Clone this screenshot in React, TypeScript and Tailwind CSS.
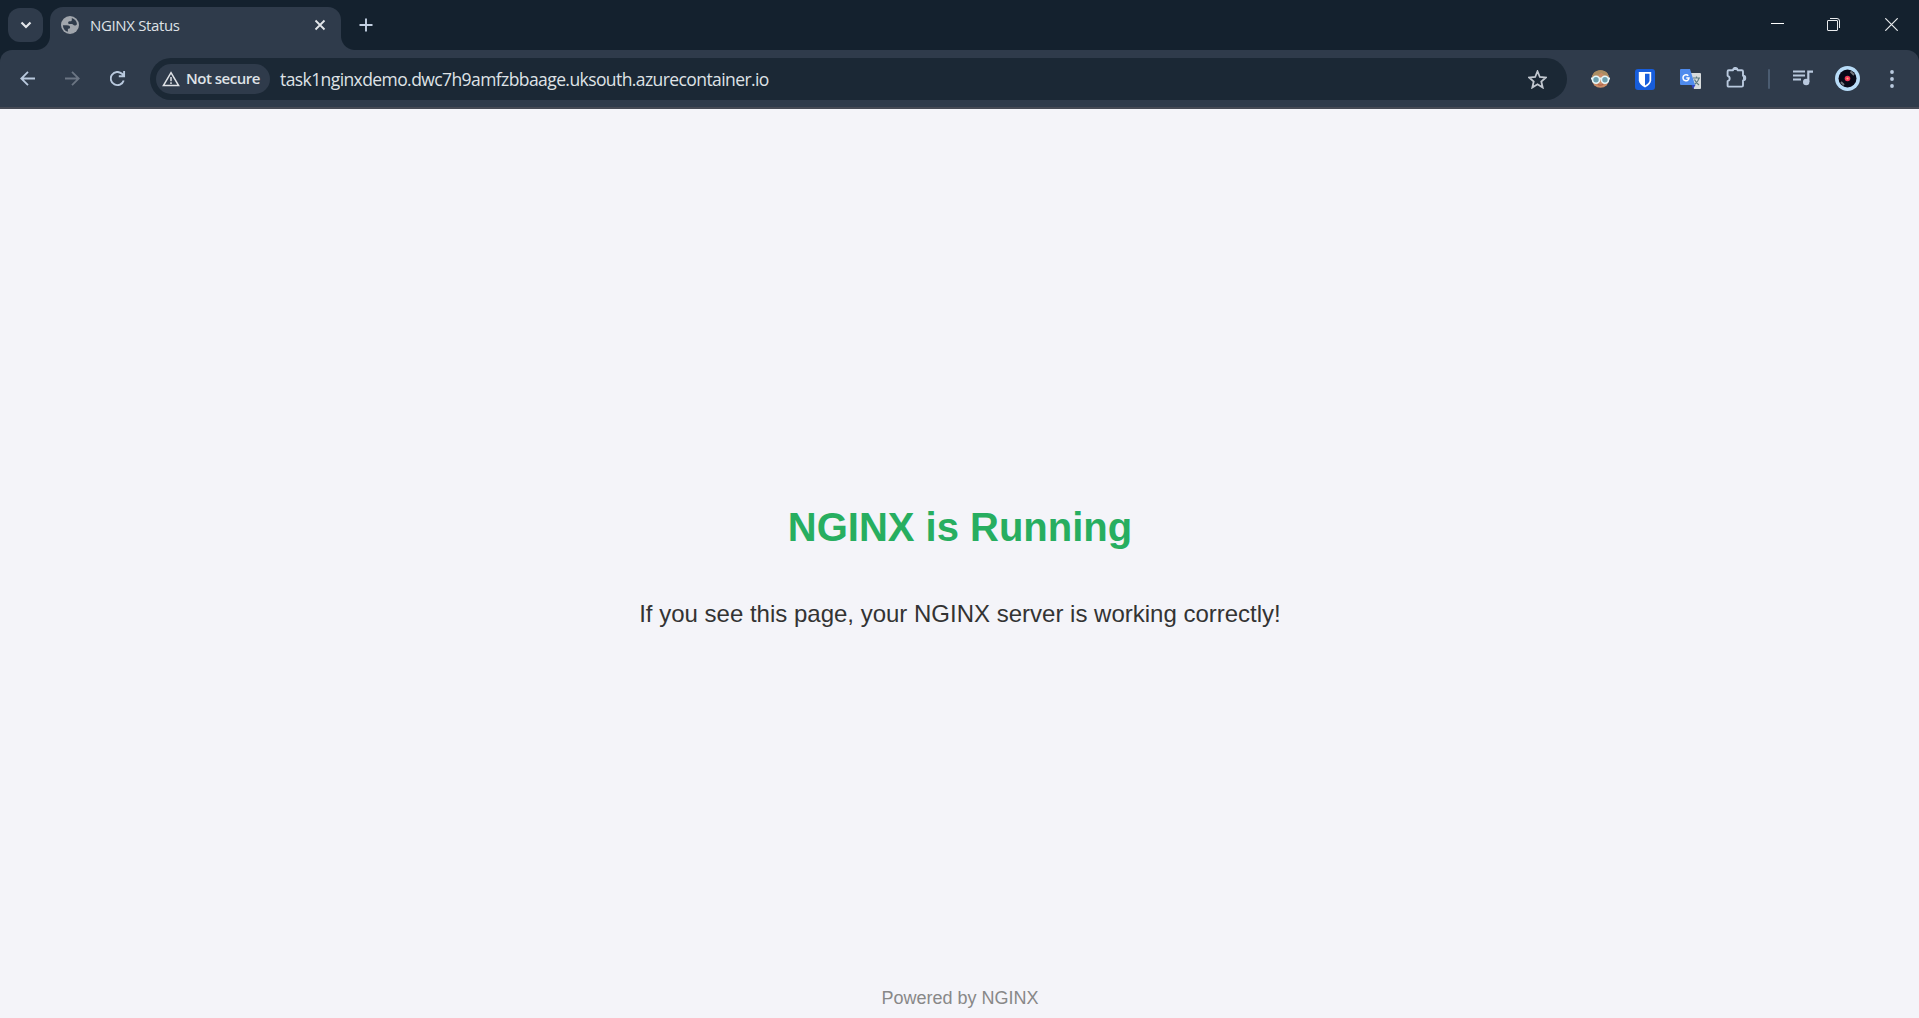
import React from "react";

const uiFont = "font-['Open_Sans','Noto_Sans',sans-serif]";

function TabStrip() {
  return (
    <div className="flex h-[50px] bg-[#14212e]">
      <button className="mt-2 ml-2 flex h-[34px] w-[35px] items-center justify-center rounded-[12px] bg-[#2f3b4b]">
        <svg width="14" height="10" viewBox="0 0 14 10" fill="none" stroke="#e3e6ea" strokeWidth="2.2">
          <path d="M2.5 2.5 7 7l4.5-4.5" />
        </svg>
      </button>
      <div className="relative mt-[7px] ml-[7px] flex h-[43px] w-[291px] items-center rounded-t-[13px] bg-[#2f3b4b] pb-[7px] pl-[11px]">
        <div className="absolute bottom-0 -left-[14px] size-[14px] bg-[radial-gradient(circle_at_0_0,transparent_13.5px,#2f3b4b_14.5px)]" />
        <div className="absolute -right-[14px] bottom-0 size-[14px] bg-[radial-gradient(circle_at_100%_0,transparent_13.5px,#2f3b4b_14.5px)]" />
        <svg width="18" height="18" viewBox="0 0 18 18">
          <circle cx="9" cy="9" r="9" fill="#a1a6ad" />
          <path d="M1.900 9.200H6c2 0 3.100.8 3.100 2 0 1.100-.9 1.500-2.200 1.500v3.100C4 15 1.900 12.500 1.900 9.200Z" fill="#2f3b4b" />
          <path d="M10.800 2.100C13.700 2.900 15.800 5.300 16 8.200c-.6.900-1.300 1.200-2.200 1.200-1.500 0-1.600-1.400-3-1.400H8.700c-1 0-1.600-.6-1.600-1.300 0-1.200 1-1.400 2.200-1.400 1.100 0 1.500-.6 1.500-1.600Z" fill="#2f3b4b" />
        </svg>
        <span className="ml-[11px] text-[15px] leading-5 tracking-[-0.35px] text-[#dfe2e6]">NGINX Status</span>
        <svg className="mr-[15px] ml-auto" width="12" height="12" viewBox="0 0 12 12" stroke="#e3e6ea" strokeWidth="1.8">
          <path d="m1.5 1.5 9 9m0-9-9 9" />
        </svg>
      </div>
      <svg className="mt-[18px] ml-[18px]" width="14" height="14" viewBox="0 0 14 14" stroke="#c3d0e2" strokeWidth="1.9">
        <path d="M7 .5v13M.5 7h13" />
      </svg>
      <div className="mt-[18px] mr-[21px] ml-auto flex h-[13px] items-start gap-[43px]">
        <svg width="13" height="13" viewBox="0 0 13 13" stroke="#fff"><path d="M0 5.5h13" /></svg>
        <svg width="13" height="13" viewBox="0 0 13 13" stroke="#e9ebed" fill="none">
          <rect x=".5" y="2.5" width="10" height="10" rx=".5" />
          <path d="M3 .5h7A2.5 2.5 0 0 1 12.5 3v7" />
        </svg>
        <svg className="ml-[2px]" width="13" height="13" viewBox="0 0 13 13" stroke="#e9ebed" strokeWidth="1.2"><path d="m.3.3 12.4 12.4m0-12.4L.3 12.7" /></svg>
      </div>
    </div>
  );
}

function FaceIcon() {
  return (
    <svg width="19" height="20" viewBox="0 0 20 20">
      <circle cx="10" cy="10" r="9.3" fill="#c98d68" />
      <path d="M1.5 8C1.2 3.5 5.5.7 10 .7s8.8 2.8 8.5 7.3C16 7.5 13 6 11 3.5 8.5 6 5 7.5 1.5 8Z" fill="#ab8d62" />
      <path d="M7 15.500q3 2 6 0" stroke="#ad5f4b" strokeWidth="1.2" fill="none" />
      <path d="M0 9.500h20" stroke="#e6f2f4" strokeWidth="2" />
      <circle cx="5.3" cy="10.8" r="3.7" fill="#6da0ae" stroke="#e6f7fa" strokeWidth="1.7" />
      <circle cx="14.7" cy="10.8" r="3.7" fill="#6da0ae" stroke="#e6f7fa" strokeWidth="1.7" />
    </svg>
  );
}

function TranslateIcon() {
  return (
    <svg width="21" height="21" viewBox="0 0 21 21">
      <path d="M8 4h12a1 1 0 0 1 1 1v14a1 1 0 0 1-1 1h-6z" fill="#d8dbdc" />
      <path d="M11.500 16h4L13 20z" fill="#3345c4" />
      <path d="M13 9h7M16.500 7.500V9M19 9c-.5 3-2.500 5-4.500 6.500M14.500 10.500c1 2.500 2.500 4 4.500 5.500" stroke="#607d82" strokeWidth="1.2" fill="none" />
      <path d="M1 0h9l5 16H1a1 1 0 0 1-1-1V1a1 1 0 0 1 1-1Z" fill="#4f8bed" />
      <path d="M8.300 6.800A3 3 0 1 0 9 9H6.300" stroke="#fff" strokeWidth="1.5" fill="none" />
    </svg>
  );
}

function Toolbar() {
  return (
    <div className="bg-[#14212e]">
      <div className="flex h-[59px] items-center rounded-t-[12px] border-b-2 border-[#464a55] bg-[#2f3b4b] pr-[25px] pl-[20px]">
        <svg width="15" height="15" viewBox="0 0 15 15" fill="none" stroke="#b9c9de" strokeWidth="1.8">
          <path d="M15 7.500H1.500M8 .8 1.300 7.500 8 14.200" />
        </svg>
        <svg className="ml-[30px]" width="15" height="15" viewBox="0 0 15 15" fill="none" stroke="#6b7583" strokeWidth="1.8">
          <path d="M0 7.500h13.500M7 .8l6.700 6.700L7 14.200" />
        </svg>
        <svg className="ml-[30px]" width="16" height="16" viewBox="0.5 0.5 16 16" fill="none" stroke="#b9c9de" strokeWidth="1.9">
          <path d="M14.200 10A6.600 6.600 0 1 1 12.500 3.300L14.500 5.200M14.600.5v5.200H9.300" />
        </svg>
        <div className="ml-[24px] flex h-[42px] w-[1417px] items-center rounded-full bg-[#1b2835] pr-[20px] pl-[6px]">
          <div className="flex h-[30px] w-[114px] items-center rounded-full bg-[#2f3b4b] pl-[6px]">
            <svg width="18" height="16" viewBox="0 0 18 16" fill="none" stroke="#dfe2e6" strokeWidth="1.5">
              <path d="M9 1.700 16.600 14.600H1.400ZM9 6v4.300M9 11.300v1.600" />
            </svg>
            <span className="mb-px ml-[6px] whitespace-nowrap text-[15px] leading-5 font-semibold tracking-[-0.5px] text-[#dfe2e6]">Not secure</span>
          </div>
          <span className="ml-[10px] whitespace-nowrap text-[17.5px] leading-6 tracking-[-0.585px] text-[#dfe2e6]">task1nginxdemo.dwc7h9amfzbbaage.uksouth.azurecontainer.io</span>
          <svg className="mt-px ml-auto" width="19" height="19" viewBox="1 1 18 18" fill="none" stroke="#c1c7cf" strokeWidth="1.7">
            <path d="m10 2.200 2.200 5.400 5.800.5-4.400 3.800 1.300 5.700L10 14.600l-4.900 3 1.300-5.700L2 8.100l5.800-.5z" />
          </svg>
        </div>
        <div className="flex flex-1 items-center">
          <div className="mt-px ml-[24px]"><FaceIcon /></div>
          <svg className="mt-px ml-[25px]" width="20" height="21" viewBox="0 0 20 21">
            <rect width="20" height="21" rx="3" fill="#175ddc" />
            <path d="M3.800 3h12.400v8.200c0 3-2.600 5.200-6.200 7.300-3.600-2.100-6.200-4.300-6.200-7.300Z" fill="#fff" />
            <path d="M10 4.800h4.500v6.400c0 2-1.700 3.600-4.500 5.300Z" fill="#175ddc" />
          </svg>
          <div className="mt-[2px] ml-[25px]"><TranslateIcon /></div>
          <svg className="ml-[25px] -mt-[2px]" width="21" height="21" viewBox="0 0 21 21">
            <path d="M2.800 3.200H7a2.300 2.300 0 0 1 4.600 0h4.200q1.200 0 1.200 1.200v4.400a2.300 2.300 0 0 1 0 4.600v5q0 1.200-1.200 1.200H2.800q-1.200 0-1.200-1.200v-4.200a2.800 2.800 0 0 0 0-5.400V4.400q0-1.200 1.200-1.200Z" fill="none" stroke="#b9c9de" strokeWidth="1.9" strokeLinejoin="round" />
            <path d="M7.300 3a2 2 0 0 1 4 0zM17 9.100a2 2 0 0 1 0 4z" fill="#b9c9de" />
          </svg>
          <div className="ml-[21px] h-[20px] w-[2px] rounded bg-[#4b5c71]" />
          <svg className="-mt-px ml-[23px]" width="20" height="16" viewBox="0 0 20 16">
            <path d="M0 1.500h12M0 5.500h12M0 9.500h8" stroke="#b9c9de" strokeWidth="2" />
            <path d="M14.200.5H20v2.200h-3.600V12h-2.200z" fill="#b9c9de" />
            <circle cx="13.200" cy="12" r="3.200" fill="#b9c9de" />
          </svg>
          <svg className="ml-[22px]" width="25" height="25" viewBox="0 0 25 25">
            <circle cx="12.500" cy="12.500" r="12.500" fill="#b8dcf8" />
            <circle cx="12.500" cy="12.500" r="9" fill="#080918" />
            <path d="m15.500 5.500 3.500 3.500M6 16l3 3" stroke="#73767d" strokeWidth="1.8" />
            <circle cx="12.500" cy="12.500" r="2.800" fill="#ed355a" />
            <circle cx="12.500" cy="12.500" r="1.100" fill="#ffb16d" />
          </svg>
          <svg className="ml-auto" width="4" height="18" viewBox="0 0 4 18" fill="#b9c9de">
            <circle cx="2" cy="2" r="1.900" /><circle cx="2" cy="9" r="1.900" /><circle cx="2" cy="16" r="1.900" />
          </svg>
        </div>
      </div>
    </div>
  );
}

export default function App() {
  return (
    <div className="flex h-screen flex-col overflow-hidden bg-[#f4f4f9]">
      <header className={uiFont}>
        <TabStrip />
        <Toolbar />
      </header>
      <main className="flex flex-1 flex-col items-center pl-px font-['Liberation_Sans',Arial,sans-serif]">
        <h1 className="mt-[395px] text-[40px] leading-[46px] font-bold text-[#27ae60]">NGINX is Running</h1>
        <p className="mt-[50px] text-[24px] leading-[28px] text-[#333]">If you see this page, your NGINX server is working correctly!</p>
        <footer className="mt-auto mb-[10px] text-[18px] leading-5 text-[#888]">Powered by NGINX</footer>
      </main>
    </div>
  );
}
